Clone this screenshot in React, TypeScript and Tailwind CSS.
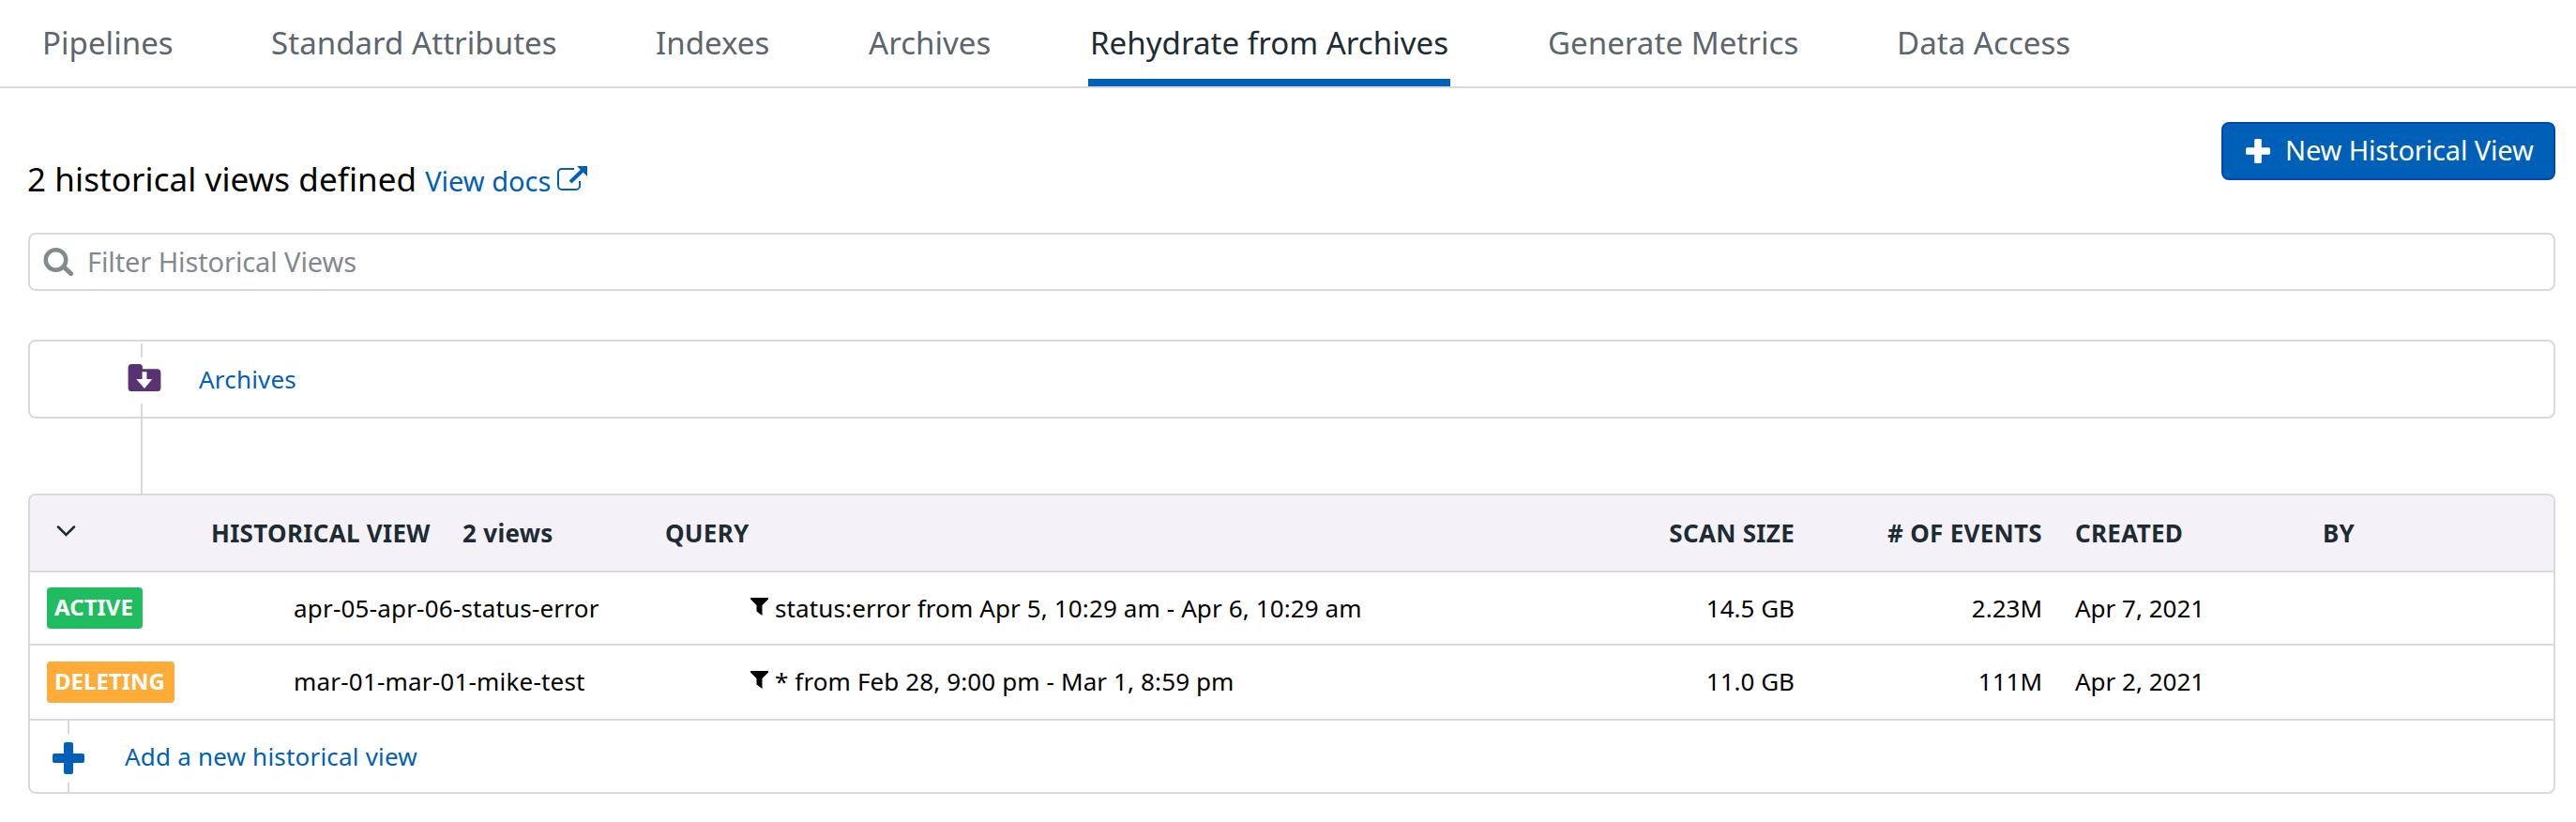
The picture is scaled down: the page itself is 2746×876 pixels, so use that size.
import React from "react";

const tabs: { label: string; width: string; active?: boolean }[] = [
  { label: "Pipelines", width: "w-[244px]" },
  { label: "Standard Attributes", width: "w-[410px]" },
  { label: "Indexes", width: "w-[227px]" },
  { label: "Archives", width: "w-[234px]" },
  { label: "Rehydrate from Archives", width: "w-[490px]", active: true },
  { label: "Generate Metrics", width: "w-[372px]" },
  { label: "Data Access", width: "w-[200px]" },
];

const rows = [
  {
    status: "ACTIVE",
    badge: "bg-[#1fbd5f] w-[102px]",
    name: "apr-05-apr-06-status-error",
    query: "status:error from Apr 5, 10:29 am - Apr 6, 10:29 am",
    size: "14.5 GB",
    events: "2.23M",
    created: "Apr 7, 2021",
    height: "h-[78px]",
  },
  {
    status: "DELETING",
    badge: "bg-[#ffab38] w-[136px]",
    name: "mar-01-mar-01-mike-test",
    query: "* from Feb 28, 9:00 pm - Mar 1, 8:59 pm",
    size: "11.0 GB",
    events: "111M",
    created: "Apr 2, 2021",
    height: "h-[80px]",
  },
];

function Plus({ className }: { className: string }) {
  return (
    <svg viewBox="0 0 34 34" className={className} fill="currentColor">
      <rect x="12" y="0" width="10" height="34" rx="2" />
      <rect x="0" y="12" width="34" height="10" rx="2" />
    </svg>
  );
}

export default function App() {
  return (
    <div className="h-[876px] w-[2746px] overflow-hidden bg-white font-['Noto_Sans',sans-serif] text-[26px] whitespace-nowrap text-black">
      <nav className="flex h-[94px] border-b-2 border-[#d9d8de] pl-[45px] text-[33px] tracking-[0.05px] text-[#5b666d]">
        {tabs.map((t) => (
          <div key={t.label} className={`${t.width} flex shrink-0`}>
            <span className={t.active ? "h-[92px] w-[386px] border-b-8 border-[#0060b8] px-[2px] leading-[92px] text-[#1c2b34]" : "leading-[92px]"}>
              {t.label}
            </span>
          </div>
        ))}
      </nav>

      <main className="pr-[22px] pl-[30px]">
        <header className="flex h-[154px] items-start justify-between">
          <h1 className="-ml-px flex items-baseline pt-[72px] text-[35px] leading-[50px] tracking-[0.09px]">
            2 historical views defined
            <a className="ml-[9px] flex items-baseline text-[29px] tracking-normal text-[#0060b8]">
              View docs
              <svg viewBox="0 0 32 27" className="ml-[7px] h-[27px] w-[32px]" fill="none" stroke="currentColor">
                <path d="M18 3H5a4 4 0 0 0-4 4v14a4 4 0 0 0 4 4h15a4 4 0 0 0 4-4v-5" strokeWidth="2" />
                <path d="M14 17L27 4.500" strokeWidth="4" />
                <path d="M21 0h11v11z" fill="currentColor" stroke="none" />
              </svg>
            </a>
          </h1>
          <button className="mt-[36px] flex h-[62px] w-[356px] items-center rounded-[8px] border-2 border-[#0048b0] bg-[#0060b8] pl-[24px] text-[29px] tracking-[-0.13px] text-white">
            <Plus className="mr-[16px] h-[26px] w-[26px]" />
            <span className="pb-[2px]">New Historical View</span>
          </button>
        </header>

        <div className="flex h-[62px] items-center rounded-[8px] border-2 border-[#d9d8de] pl-[14px] text-[29px] tracking-[-0.1px] text-[#828a90]">
          <svg viewBox="0 0 32 30" className="mr-[15px] mb-[1px] h-[30px] w-[32px]" fill="none" stroke="currentColor">
            <circle cx="13.500" cy="13" r="10.750" strokeWidth="4.500" />
            <path d="M22 20.500l7.500 7" strokeWidth="5" strokeLinecap="round" />
          </svg>
          Filter Historical Views
        </div>

        <section className="mt-[52px] flex h-[84px] rounded-[8px] border-2 border-[#d9d8de] text-[#0060b8]">
          <div className="flex w-[180px] flex-col pl-[104px]">
            <div className="mt-[2px] ml-[14px] h-[16px] w-[2px] bg-[#d9d8de]" />
            <svg viewBox="0 0 36 30" className="mt-[7px] h-[30px] w-[36px]">
              <path d="M4 0h8q4 0 4 4v1.500h16q4 0 4 4V26q0 4-4 4H4q-4 0-4-4V4q0-4 4-4z" fill="#593273" />
              <path d="M15.500 8.500h5v8h6L18 27 9 16.500h6.500z" fill="#fff" />
            </svg>
            <div className="mt-[13px] ml-[14px] h-[14px] w-[2px] bg-[#d9d8de]" />
          </div>
          <a className="leading-[80px] tracking-[0.2px]">Archives</a>
        </section>
        <div className="ml-[120px] h-[80px] w-[2px] bg-[#d9d8de]" />

        <section className="h-[320px] overflow-hidden rounded-[8px] border-2 border-[#d9d8de]">
          <div className="flex h-[82px] border-b-2 border-[#d9d8de] bg-[#f4f2f6] font-bold leading-[80px] tracking-[0.3px] text-[#1c2b34]">
            <div className="flex w-[193px] items-center pl-[28px]">
              <svg viewBox="0 0 20 12" className="mb-[4px] h-[12px] w-[21px]" fill="none" stroke="currentColor" strokeWidth="2.500" strokeLinecap="round">
                <path d="M1.500 1.500l8.500 8.500 8.500-8.500" />
              </svg>
            </div>
            <div className="w-[268px]">HISTORICAL VIEW</div>
            <div className="w-[216px]">2 views</div>
            <div className="w-[900px]">QUERY</div>
            <div className="w-[304px] text-right">SCAN SIZE</div>
            <div className="w-[264px] text-right">
              # OF EVENTS
            </div>
            <div className="w-[264px] pl-[35px]">CREATED</div>
            <div className="pl-[35px]">BY</div>
          </div>

          {rows.map((r) => (
            <div key={r.status} className={`${r.height} flex border-b-2 border-[#d9d8de] leading-[76px]`}>
              <div className="flex w-[281px] items-center pl-[18px]">
                <span className={`${r.badge} flex h-[44px] items-center justify-center rounded-[4px] pr-[2px] pb-[3px] text-[24px] leading-none font-bold text-white`}>
                  {r.status}
                </span>
              </div>
              <div className="w-[487px] tracking-[0.2px]">{r.name}</div>
              <div className="flex w-[813px] tracking-[0.12px]">
                <svg viewBox="0 0 19 19" className="mt-[27px] mr-[7px] h-[19px] w-[19px]">
                  <path d="M0 0h19v1.500l-6.500 6.500v11l-6-4.500V8L0 1.500z" />
                </svg>
                {r.query}
              </div>
              <div className="w-[300px] text-right">{r.size}</div>
              <div className="w-[264px] text-right">{r.events}</div>
              <div className="pl-[35px]">{r.created}</div>
            </div>
          ))}

          <div className="flex h-[76px] text-[#0060b8]">
            <div className="flex w-[101px] flex-col pl-[24px]">
              <div className="ml-[16px] h-[14px] w-[2px] bg-[#d9d8de]" />
              <Plus className="my-[9px] h-[34px] w-[34px]" />
              <div className="ml-[16px] h-[10px] w-[2px] bg-[#d9d8de]" />
            </div>
            <a className="leading-[76px] tracking-[0.2px]">Add a new historical view</a>
          </div>
        </section>
      </main>
    </div>
  );
}
